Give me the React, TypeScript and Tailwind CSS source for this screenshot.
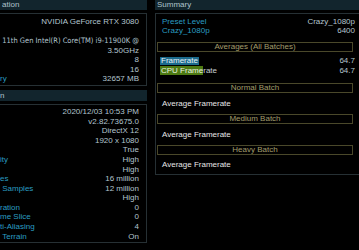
const label = 'text-[#2a9dc2]'
const value = 'text-[#b3c5cf]'

const hwRows: [string, string][] = [
  ['', 'NVIDIA GeForce RTX 3080'],
  ['', ''],
  ['', '11th Gen Intel(R) Core(TM) i9-11900K @'],
  ['', '3.50GHz'],
  ['', '8'],
  ['', '16'],
  ['ry', '32657 MB'],
]

const runRows: [string, string][] = [
  ['', '2020/12/03 10:53 PM'],
  ['', 'v2.82.73675.0'],
  ['', 'DirectX 12'],
  ['', '1920 x 1080'],
  ['', 'True'],
  ['ity', 'High'],
  ['', 'High'],
  ['es', '16 million'],
  ['\u00a0Samples', '12 million'],
  ['', 'High'],
  ['ration', '0'],
  ['me Slice', '0'],
  ['ti-Aliasing', '4'],
  ['\u00a0Terrain', 'On'],
]

function Header({ title }: { title: string }) {
  return (
    <div className="flex h-[10px] items-center bg-[#12252d] pl-[2px] text-[8px] leading-none text-[#aec3cc]">
      {title}
    </div>
  )
}

function Rows({ rows }: { rows: [string, string][] }) {
  return (
    <>
      {rows.map(([k, v], i) => (
        <div key={i} className="flex h-[9.6px] items-center justify-between whitespace-nowrap pr-[7px] leading-none">
          <span className={label}>{k}</span>
          {/* the CPU name is long; the game's font is much narrower than Arial here */}
          <span
            className={
              v.length > 30
                ? `${value} font-['Liberation_Sans_Narrow','DejaVu_Sans_Condensed',sans-serif] text-[7.5px]`
                : value
            }
          >
            {v}
          </span>
        </div>
      ))}
    </>
  )
}

function BatchBox({ title }: { title: string }) {
  return (
    <div className="ml-[1px] flex h-[10px] w-[196px] items-center justify-center border border-[#4a482a] leading-none text-[#a39d6c]">
      {title}
    </div>
  )
}

function AvgRow({ h }: { h: string }) {
  return (
    <div className={`flex ${h} items-center pl-[6px] leading-none text-[#e6e6e6]`}>Average Framerate</div>
  )
}

export default function App() {
  return (
    <div className="flex h-[250px] w-[359px] overflow-hidden bg-black font-['Liberation_Sans',sans-serif] text-[8px]">
      {/* left: system info + run settings */}
      <div className="flex w-[147px] shrink-0 flex-col">
        <Header title="ation" />
        <div className="mt-[3px] w-[147px] border-t border-r border-b border-[#263034] pt-[3px] pb-[1px]">
          <Rows rows={hwRows} />
        </div>
        <div className="mt-[4px]">
          <div className="flex h-[11px] items-center bg-[#12252d] text-[8px] leading-none text-[#aec3cc]">n</div>
        </div>
        <div className="mt-[3px] w-[147px] border-t border-r border-b border-[#263034] pt-[2px] pb-[1px]">
          <Rows rows={runRows} />
        </div>
      </div>

      {/* right: summary */}
      <div className="ml-[8px] flex flex-1 flex-col">
        <Header title="Summary" />
        <div className="mt-[3px] border-t border-l border-b border-[#263034] pt-[3px]">
          <div className="flex h-[9.6px] items-center justify-between pr-[4px] pl-[6px] leading-none">
            <span className={label}>Preset Level</span>
            <span className={value}>Crazy_1080p</span>
          </div>
          <div className="flex h-[9.6px] items-center justify-between pr-[4px] pl-[6px] leading-none">
            <span className={label}>Crazy_1080p</span>
            <span className={value}>6400</span>
          </div>
          <div className="mt-[6px]">
            <BatchBox title="Averages (All Batches)" />
          </div>
          <div className="mt-[5px] flex h-[8px] items-center justify-between pr-[4px] pl-[4px] leading-none">
            <span className="bg-[#1b6a8b] px-[1px] text-[#e8f2f6]">Framerate</span>
            <span className={value}>64.7</span>
          </div>
          <div className="mt-[2px] flex h-[8px] items-center justify-between pr-[4px] pl-[4px] leading-none">
            <span className="text-[#e8f2e0]">
              <span className="bg-[#4d7a12] pl-[1px]">CPU Frame</span>
              <span className="text-[#c8d0d4]">rate</span>
            </span>
            <span className={value}>64.7</span>
          </div>
          <div className="mt-[8px]">
            <BatchBox title="Normal Batch" />
          </div>
          <AvgRow h="h-[21px]" />
          <BatchBox title="Medium Batch" />
          <AvgRow h="h-[21px]" />
          <BatchBox title="Heavy Batch" />
          <AvgRow h="h-[19px]" />
        </div>
      </div>
    </div>
  )
}
